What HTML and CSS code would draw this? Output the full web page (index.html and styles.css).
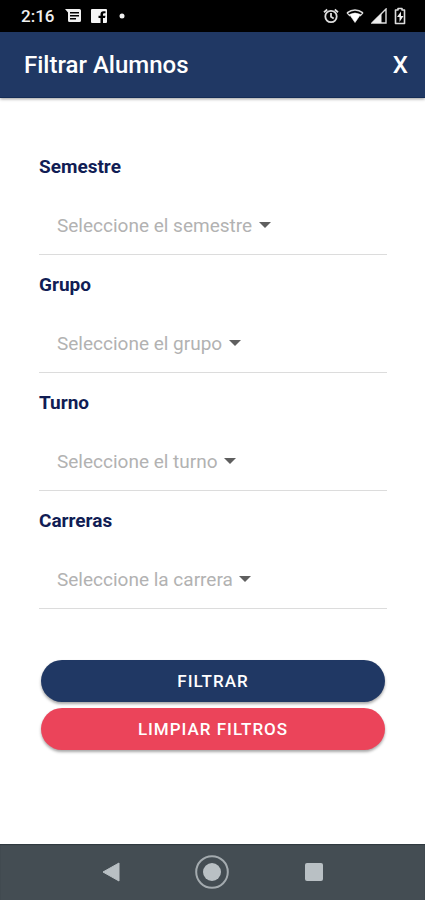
FILE: index.html
```html
<!DOCTYPE html>
<html lang="es">
<head>
<meta charset="UTF-8">
<meta name="viewport" content="width=device-width, initial-scale=1.0">
<title>Filtrar Alumnos</title>
<link rel="stylesheet" href="styles.css">
</head>
<body>

<div class="status-bar">
    <span class="time">2:16</span>
    <div class="notifications">
        <svg width="16" height="14" viewBox="0 0 16 14"><path fill="#f0f0f0" fill-rule="evenodd" d="M0 0h14.500q1.500 0 1.500 1.500v10q0 1.500-1.500 1.500h-10q-1.500 0-1.500-1.500v-8zM5 3v1.500h9v-1.500zM5 6v1.500h9v-1.500zM5 9v1.500h6v-1.500z"/></svg>
        <svg width="16" height="14" viewBox="0 0 16 14"><path fill="#f5f5f5" fill-rule="evenodd" d="M1 0h14q1 0 1 1v12q0 1-1 1h-3v-5h2l.5-2.200h-2.500v-1.500q0-1.100 1.200-1.100h1.300v-2h-2q-3 0-3 3v1.600h-2v2.200h2v5h-8.500q-1 0-1-1v-12q0-1 1-1z"/></svg>
        <svg width="8" height="14" viewBox="0 0 8 14"><circle cx="5" cy="7" r="2.500" fill="#f0f0f0"/></svg>
    </div>
    <div class="system">
        <svg width="16" height="16" viewBox="0 0 16 16" fill="none" stroke="#ddd" stroke-width="1.800"><circle cx="8" cy="8.500" r="5.700"/><path d="M8 5v3.800l2.700 1.700M1 4.200l3.200-2.700M15 4.200l-3.200-2.700"/></svg>
        <svg width="18" height="16" viewBox="0 0 18 16"><path d="M1 4.800q8-5.500 16 0" fill="none" stroke="#ddd" stroke-width="1.600"/><path d="M3.500 6.500q5.500-3 11 0l-5.500 8z" fill="#fff" stroke="#fff" stroke-width=".6"/><path d="M1 4.800l3 3.200M17 4.800l-3 3.200" stroke="#ddd" stroke-width="1.200"/></svg>
        <svg width="16" height="16" viewBox="0 0 16 16"><path d="M1 15l14-14v14z" fill="none" stroke="#ddd" stroke-width="1.400"/><path d="M1 15l9.500-9.500v9.500z" fill="#eee"/></svg>
        <svg width="12" height="18" viewBox="0 0 12 18"><path d="M4 1.500h4v1.500h2.500v13.500h-9v-13.500h2.500z" fill="none" stroke="#ddd" stroke-width="1.600" stroke-linejoin="round"/><path d="M7 4.500l-4 5.500h2.500v5l4-6h-2.500z" fill="#eee"/></svg>
    </div>
</div>

<header class="toolbar">
    <h1>Filtrar Alumnos</h1>
    <button type="button" class="close">X</button>
</header>

<main>
    <form id="filterForm">
        <div class="field">
            <label for="semestre">Semestre</label>
            <div class="select-row">
                <select id="semestre" name="semestre">
                    <option value="">Seleccione el semestre</option>
                </select>
                <svg class="arrow" width="12" height="6" viewBox="0 0 12 6"><path d="M0 0h12l-6 6z"/></svg>
            </div>
        </div>

        <div class="field">
            <label for="grupo">Grupo</label>
            <div class="select-row">
                <select id="grupo" name="grupo">
                    <option value="">Seleccione el grupo</option>
                </select>
                <svg class="arrow" width="12" height="6" viewBox="0 0 12 6"><path d="M0 0h12l-6 6z"/></svg>
            </div>
        </div>

        <div class="field">
            <label for="turno">Turno</label>
            <div class="select-row">
                <select id="turno" name="turno">
                    <option value="">Seleccione el turno</option>
                </select>
                <svg class="arrow" width="12" height="6" viewBox="0 0 12 6"><path d="M0 0h12l-6 6z"/></svg>
            </div>
        </div>

        <div class="field">
            <label for="carrera">Carreras</label>
            <div class="select-row">
                <select id="carrera" name="carrera">
                    <option value="">Seleccione la carrera</option>
                </select>
                <svg class="arrow" width="12" height="6" viewBox="0 0 12 6"><path d="M0 0h12l-6 6z"/></svg>
            </div>
        </div>

        <div class="actions">
            <button type="submit" class="btn">Filtrar</button>
            <button type="reset" class="btn btn-danger">Limpiar filtros</button>
        </div>
    </form>
</main>

<nav class="nav-bar">
    <button type="button" aria-label="Atrás">
        <svg width="18" height="20" viewBox="0 0 18 20"><path d="M17 1v18l-16-9z" fill="#b9c0c4" stroke="#b9c0c4" stroke-linejoin="round"/></svg>
    </button>
    <button type="button" aria-label="Inicio">
        <svg width="34" height="34" viewBox="0 0 34 34"><circle cx="17" cy="17" r="15.800" fill="none" stroke="#a4abaf" stroke-width="2"/><circle cx="17" cy="17" r="9" fill="#b9c0c4"/></svg>
    </button>
    <button type="button" aria-label="Recientes">
        <svg width="20" height="20" viewBox="0 0 20 20"><rect x="1" y="1" width="18" height="18" rx="2" fill="#b9c0c4"/></svg>
    </button>
</nav>

</body>
</html>
```
FILE: styles.css
```css
body {
    font-family: Roboto, sans-serif;
    background-color: #ffffff;
    margin: 0;
    min-height: 100vh;
    display: flex;
    flex-direction: column;
}

button {
    font-family: inherit;
    border: none;
    padding: 0;
    cursor: pointer;
}

svg {
    display: block;
}

.status-bar {
    display: flex;
    align-items: center;
    height: 32px;
    padding: 0 19px 0 21px;
    background-color: #000000;
    color: #f0f0f0;
}

.time {
    font-size: 17px;
    font-weight: 500;
}

.notifications {
    display: flex;
    gap: 10px;
    margin-left: 11px;
}

.system {
    display: flex;
    align-items: center;
    gap: 7px;
    margin-left: auto;
}

.toolbar {
    display: flex;
    align-items: center;
    justify-content: space-between;
    height: 66px;
    padding: 0 17px 0 24px;
    box-sizing: border-box;
    background-color: #203864;
    border-bottom: 1px solid #142c55;
    box-shadow: 0 1px 3px rgba(0, 0, 0, 0.4);
    color: #ffffff;
}

.toolbar h1 {
    margin: 0;
    font-size: 24px;
    font-weight: 500;
}

.close {
    background: none;
    color: #ffffff;
    font-size: 24px;
    font-weight: 500;
}

main {
    flex: 1;
    padding: 58px 38px 0 39px;
}

.field {
    margin-bottom: 19px;
}

.field label {
    display: block;
    line-height: 22px;
    font-size: 19px;
    font-weight: bold;
    color: #111d54;
}

.select-row {
    display: flex;
    align-items: center;
    gap: 6px;
    padding: 35px 18px 17px;
    border-bottom: 1px solid #dcdcdc;
}

select {
    appearance: none;
    border: none;
    padding: 0;
    background: none;
    height: 24px;
    font-family: inherit;
    font-size: 19px;
    color: #b2b2b2;
}

.arrow {
    fill: #5f5f5f;
}

.actions {
    display: flex;
    flex-direction: column;
    gap: 6px;
    padding: 32px 2px;
}

.btn {
    height: 42px;
    border-radius: 21px;
    background-color: #203864;
    box-shadow: 0 2px 3px rgba(0, 0, 0, 0.35);
    color: #ffffff;
    font-size: 17px;
    font-weight: 500;
    letter-spacing: 1px;
    text-transform: uppercase;
}

.btn-danger {
    background-color: #eb445a;
}

.nav-bar {
    display: flex;
    align-items: center;
    justify-content: center;
    gap: 75px;
    height: 56px;
    background-color: #444d53;
    box-shadow: inset 0 1px 1px #2f393f;
}

.nav-bar button {
    background: none;
}
```
